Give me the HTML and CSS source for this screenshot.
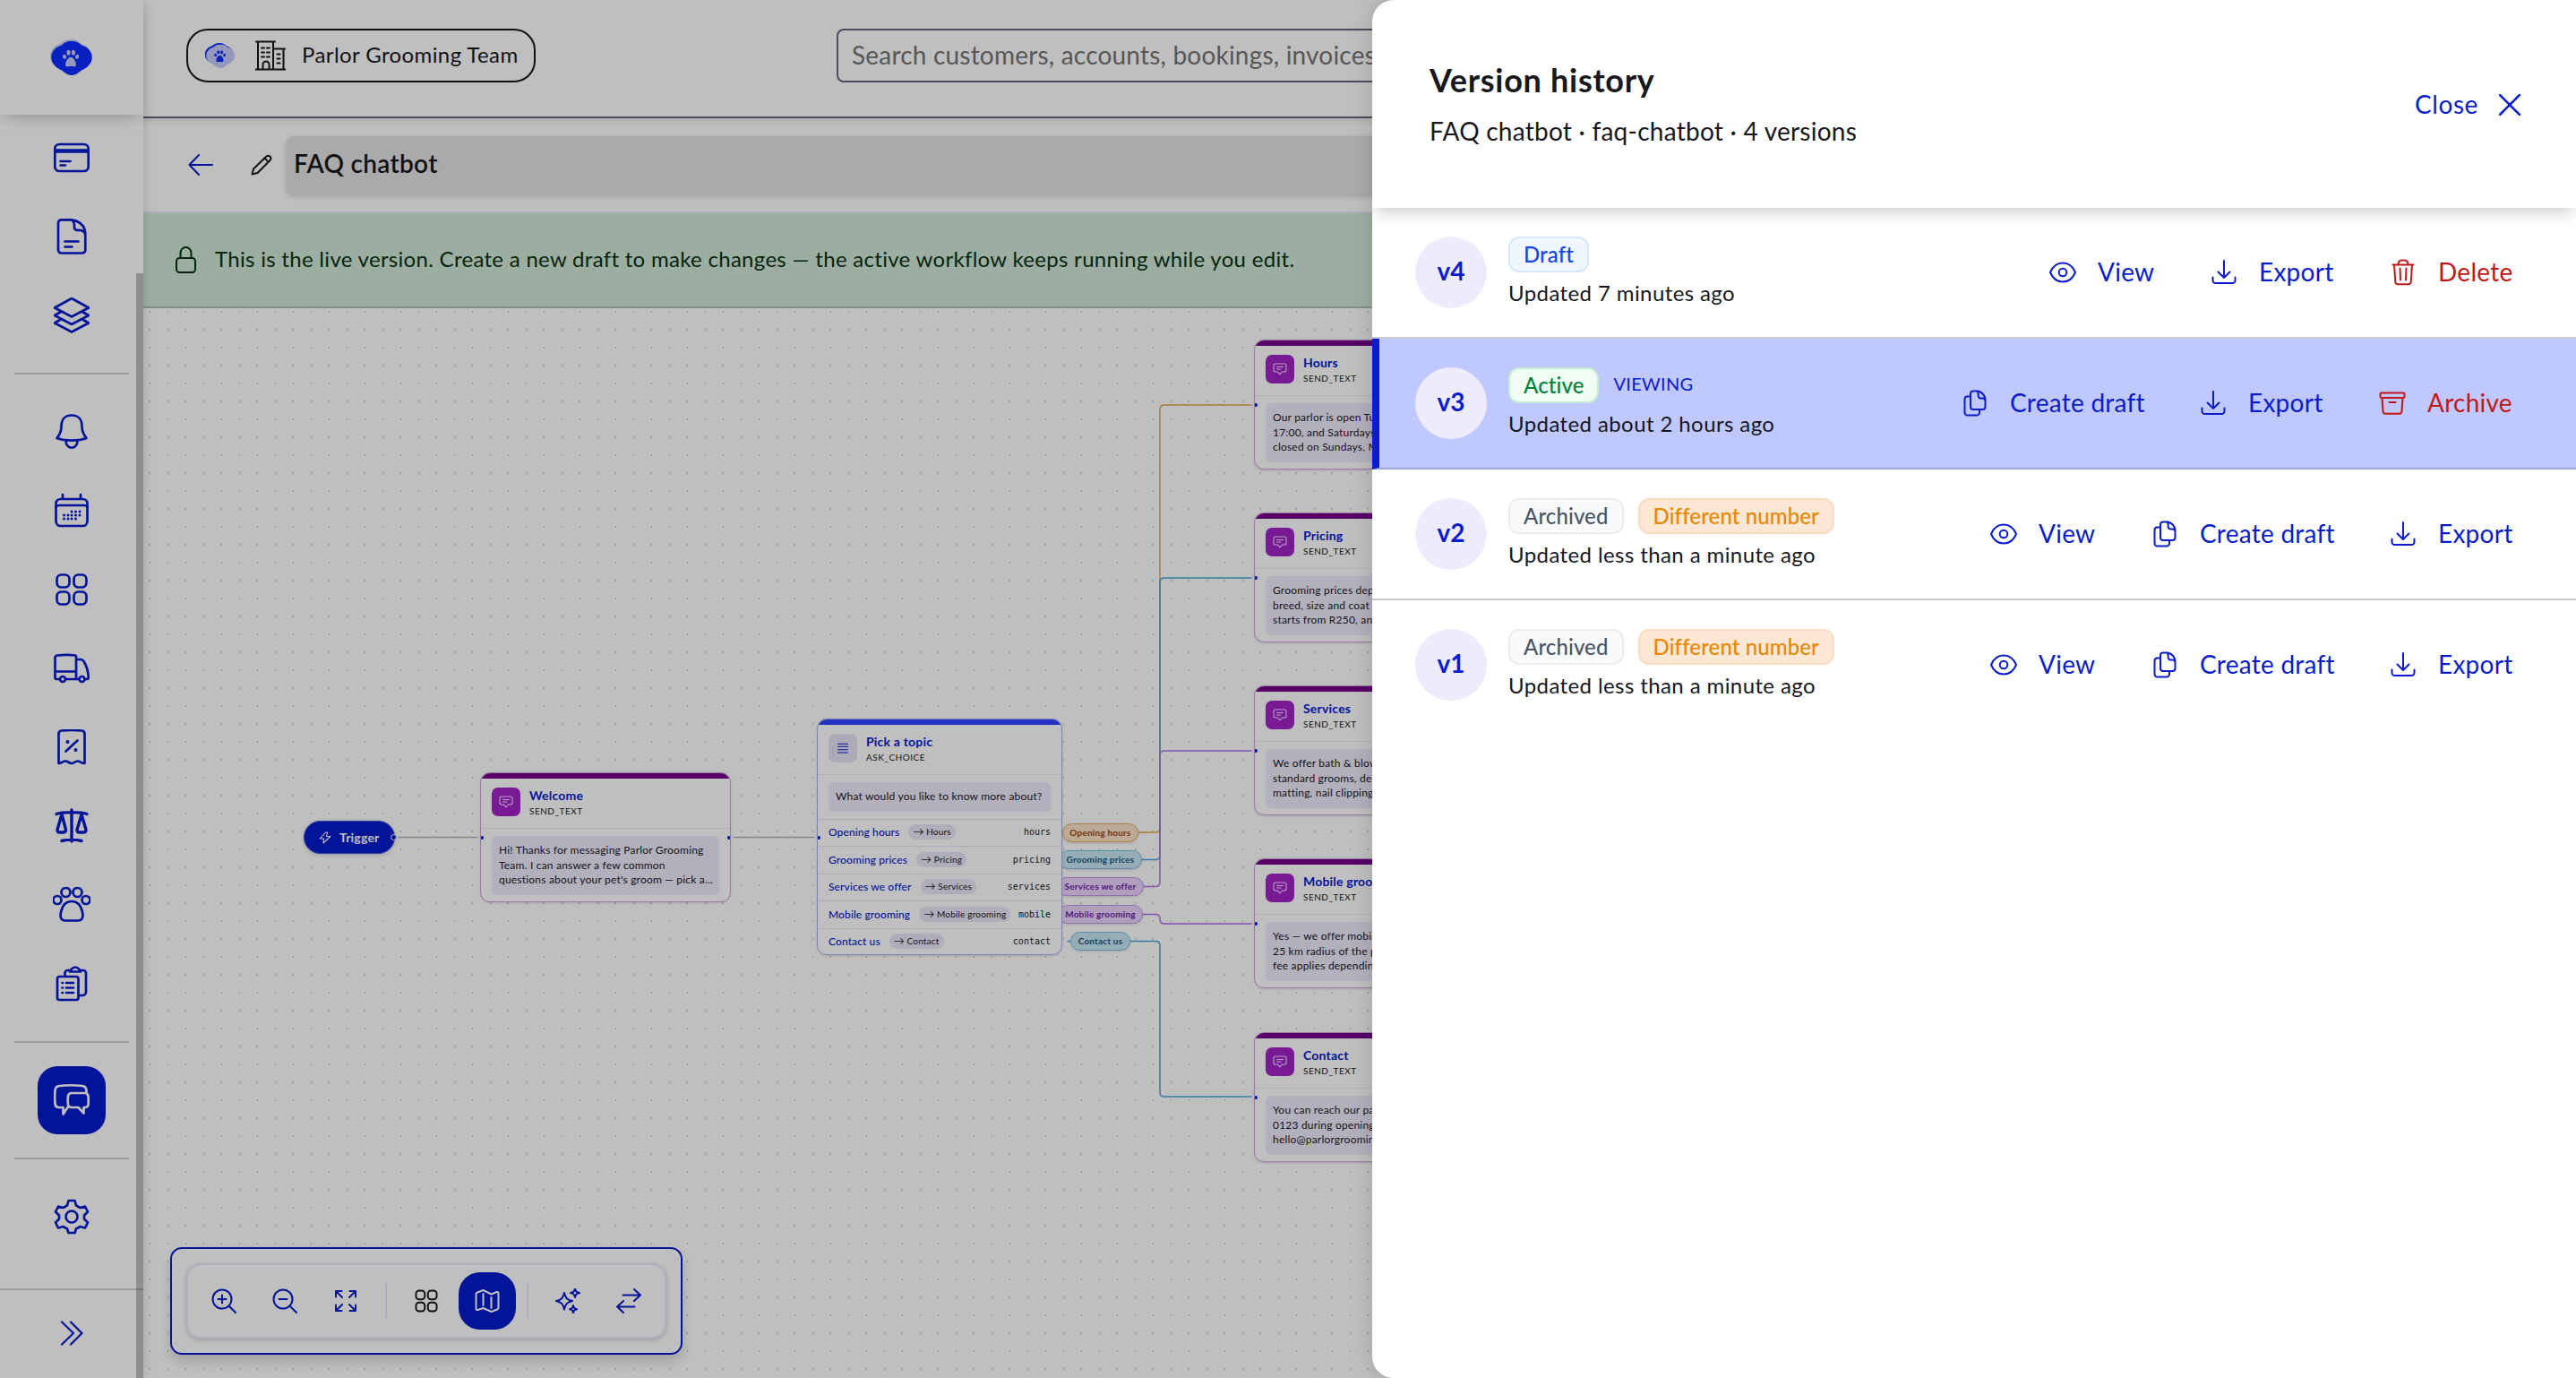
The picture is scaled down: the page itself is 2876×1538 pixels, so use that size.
FILE: index.html
```html
<!DOCTYPE html>
<html lang="en">
<head>
    <meta charset="UTF-8">
    <meta name="viewport" content="width=device-width, initial-scale=1.0">
    <title>FAQ chatbot - Version history</title>
    <link rel="stylesheet" href="styles.css">
</head>
<body>
    <!-- Shared icons -->
    <svg class="sprite" aria-hidden="true">
        <symbol id="i-eye" viewBox="0 0 32 32"><path d="M2 16C5 8.700 10 5.500 16 5.500S27 8.700 30 16C27 23.300 22 26.500 16 26.500S5 23.300 2 16Z"/><circle cx="16" cy="16" r="4.300"/></symbol>
        <symbol id="i-download" viewBox="0 0 32 32"><path d="M16 3v18.500M9.500 15.500l6.500 6.500 6.500-6.500M3.500 21.500v3.500a3 3 0 0 0 3 3h19a3 3 0 0 0 3-3v-3.500"/></symbol>
        <symbol id="i-trash" viewBox="0 0 32 32"><path d="M4.500 7.500h23M10.500 7.500c0-3 1.500-5 4-5h3c2.500 0 4 2 4 5M6 7.500l1.300 19a3 3 0 0 0 3 2.800h11.400a3 3 0 0 0 3-2.800L26 7.500M12.500 11.500l.5 13M19.500 11.500l-.5 13"/></symbol>
        <symbol id="i-copy" viewBox="0 0 32 32"><path d="M14 2.500h5c5 1 8.500 5 8.500 10V20a3 3 0 0 1-3 3H14a3 3 0 0 1-3-3V5.500a3 3 0 0 1 3-3ZM18.500 2.500c1 1 1.200 2 1.200 4v1.500a2.500 2.500 0 0 0 2.500 2.500h2c1.800 0 3 1 3.300 2.500M11 8.500H7.500a3 3 0 0 0-3 3v15a3 3 0 0 0 3 3H18a3 3 0 0 0 3-3V23"/></symbol>
        <symbol id="i-archive" viewBox="0 0 32 32"><rect x="2.500" y="4.500" width="27" height="5.500" rx="1.500"/><path d="M4.500 10l1 15a3 3 0 0 0 3 2.800h15a3 3 0 0 0 3-2.800l1-15M12.500 15h7"/></symbol>
        <symbol id="i-message" viewBox="0 0 16 16"><path d="M3 2h10a2 2 0 0 1 2 2v5a2 2 0 0 1-2 2h-2.500L8 13.800 5.500 11H3a2 2 0 0 1-2-2V4a2 2 0 0 1 2-2ZM4.500 5.500h7M4.500 8h4.500"/></symbol>
        <symbol id="i-grid" viewBox="0 0 40 40"><rect x="3.500" y="3.500" width="14" height="14" rx="5"/><rect x="22.500" y="3.500" width="14" height="14" rx="5"/><rect x="3.500" y="22.500" width="14" height="14" rx="5"/><rect x="22.500" y="22.500" width="14" height="14" rx="5"/></symbol>
        <symbol id="i-paw" viewBox="0 0 24 24"><ellipse cx="3.600" cy="10" rx="2.400" ry="3" transform="rotate(-20 3.600 10)"/><ellipse cx="9" cy="4.500" rx="2.500" ry="3.600"/><ellipse cx="15.500" cy="4.500" rx="2.500" ry="3.600"/><ellipse cx="20.600" cy="10" rx="2.400" ry="3" transform="rotate(20 20.600 10)"/><path d="M12 10.500c-3.500 0-6.500 5.500-7 9-.4 3 1.500 4.200 3.500 3.700 2.400-.6 4.600-.6 7 0 2 .5 3.900-.7 3.500-3.700-.5-3.500-3.500-9-7-9Z"/></symbol>
        <symbol id="i-blob" viewBox="0 0 48 40"><path d="M24 0c6 0 9 2 12 5 5 1 12 6 12 14s-7 13-12 15c-4 3-7 6-12 6s-8-3-12-6C7 32 0 27 0 19S7 6 12 5c3-3 6-5 12-5Z"/></symbol>
    </svg>

    <div class="app">
        <aside class="sidebar">
            <div class="brand">
                <svg class="logo" viewBox="0 0 50 40">
                    <use href="#i-blob" x="0" y="0" width="48" height="38" class="blob-light"/>
                    <use href="#i-blob" x="1" y="2" width="48" height="38" class="blob-blue"/>
                    <use href="#i-paw" x="14" y="11" width="20" height="20" class="paw-light"/>
                </svg>
            </div>
            <nav class="menu">
                <a class="menu-item"><svg viewBox="0 0 40 40"><rect x="1.300" y="5" width="37.400" height="30" rx="5"/><path d="M1.300 11.500h37.400M1.300 13.500h37.400M7.500 24h11M7.500 28.500h5.500"/></svg></a>
                <a class="menu-item"><svg viewBox="0 0 40 40"><path d="M8.500 1.300H20C30 3 35.300 9 35.300 18v17a3.500 3.500 0 0 1-3.500 3.500H8.500A3.500 3.500 0 0 1 5 35V4.800a3.500 3.500 0 0 1 3.500-3.500ZM20 1.300c2.500 1.500 3 4 3 7v2a2.500 2.500 0 0 0 2.500 2.500h3c4 0 6 2 6.800 5M12.500 25.500h15M12.500 31.500h8"/></svg></a>
                <a class="menu-item"><svg viewBox="0 0 40 40"><path d="M20 1l19 10.500L20 21.500 1 11.500ZM8 16l-7 4 19 10 19-10-7-4M8 24.500l-7 4L20 38.500l19-10-7-4"/></svg></a>
                <hr>
                <a class="menu-item"><svg viewBox="0 0 40 40"><path d="M20 1.500C12 1.500 8.500 7 8.500 14c0 6-2.500 10-5 13 9.500 3.500 23.500 3.500 33 0-2.500-3-5-7-5-13C31.500 7 28 1.500 20 1.500ZM13.500 30c0 4.500 3 7.700 6.500 7.700s6.500-3.200 6.500-7.700"/></svg></a>
                <a class="menu-item"><svg viewBox="0 0 40 40"><rect x="2.500" y="7" width="35" height="30" rx="5"/><path d="M2.500 16q1-2 4-2h27q3 0 4 2M10 2v4M30 2v4"/><path class="dots" d="M20 21h0M24.500 21h0M29 21h0M11.500 25h0M16 25h0M20 25h0M24.500 25h0M29 25h0M11.500 29h0M16 29h0M20 29h0M24.500 29h0"/></svg></a>
                <a class="menu-item"><svg><use href="#i-grid"/></svg></a>
                <a class="menu-item"><svg viewBox="0 0 40 40"><path d="M6 32H3.500a2 2 0 0 1-2-2V8a2.500 2.500 0 0 1 2.500-2.500c7-.8 14-.8 20 0A1.500 1.500 0 0 1 25 7v25H14M25 10h5c2 0 3 1 4 3 3 5 4.500 10 4.700 17a2 2 0 0 1-2 2H36M27 32h-2M1.500 23.500H25"/><circle cx="10" cy="32" r="3"/><circle cx="31.500" cy="32" r="3"/></svg></a>
                <a class="menu-item"><svg viewBox="0 0 40 40"><path d="M5.500 38V5q0-3 3-3.500 11.500-1 23 0 3 .5 3 3.500v33c-4 0-5-2.500-8-2.500S23 38 20 38s-4-2.500-7-2.500S9 38 5.500 38ZM13.500 24.500l13-12"/><path class="dots big" d="M15.500 14h0M24.500 23h0"/></svg></a>
                <a class="menu-item"><svg viewBox="0 0 40 40"><path d="M20 2v35M3 6.500C9 4 31 4 37 6.500M9 36.500c6-1.500 16-1.500 22 0M9 7L4 24q0 3 2.500 3h4.500q2.500 0 2.500-3L9 7M31 7l-5 17q0 3 2.500 3h5q2.500 0 2.500-3L31 7" stroke-width="3.400"/></svg></a>
                <a class="menu-item"><svg class="wide" viewBox="-1 0 42 40"><circle cx="4" cy="14.500" r="4.500"/><circle cx="13.500" cy="6" r="5"/><circle cx="26.500" cy="6" r="5"/><circle cx="36" cy="14.500" r="4.500"/><path d="M20 16c-7 0-11 5-12.300 14-.7 5 1.500 7.500 5 7.500h14.600c3.500 0 5.700-2.500 5-7.500C31 21 27 16 20 16Z"/></svg></a>
                <a class="menu-item"><svg viewBox="0 0 40 40"><rect x="4" y="12" width="23.500" height="26" rx="2.500"/><path d="M12.500 11.500V8a3 3 0 0 1 3-3H18M30 5h3a3 3 0 0 1 3 3v21a4 4 0 0 1-4 4h-4M18 6.500V5c1.500 0 2-3.500 6-3.500S28.500 5 30 5v1.500ZM14 19h8M14 24.500h8M14 30h8M9.500 19h.5M9.500 24.500h.5M9.500 30h.5"/></svg></a>
                <hr>
                <a class="menu-item active"><span><svg viewBox="0 -1.500 40 40"><path d="M15.500 26.500L10.500 34v-7.500H6q-4 0-4.500-4-.8-9 0-15Q2 3 6 2.500q13-1.500 26 0 4 .5 4.500 5V11M20 10.500h14.500q3.500 0 4 3.500.5 6 0 9.500-.5 3-3.500 3h-1.500V33l-6-6.500h-7.500q-3.500 0-4-3-.5-5 0-9.500.5-3.500 4-3.500Z"/></svg></span></a>
                <hr>
                <a class="menu-item"><svg viewBox="0 0 40 40"><path d="M16.500 2h7l1.500 5.500 4.500 2.500L35 8.500l3 6L34 18.500v4l4 4-3 6-5.500-1.500L25 33.500 23.500 38h-7L15 33.500 10.500 31 5 32.500l-3-6 4-4v-4l-4-4 3-6 5.500 1.500L15 7.500Z"/><circle cx="20" cy="20" r="6.500"/></svg></a>
            </nav>
            <div class="expand"><svg viewBox="0 0 26 28"><path d="M2 1.500L15 14 2 26.500M12 1.500L24.500 14 12 26.500"/></svg></div>
            <div class="scrollbar"></div>
        </aside>

        <main class="main">
            <header class="topbar">
                <div class="team">
                    <svg class="team-logo" viewBox="0 0 50 40">
                        <use href="#i-blob" x="0" y="0" width="48" height="38" class="blob-blue"/>
                        <use href="#i-blob" x="2" y="2" width="48" height="38" class="blob-light"/>
                        <use href="#i-paw" x="15" y="11" width="20" height="20" class="paw-blue"/>
                    </svg>
                    <svg class="building" viewBox="0 0 34 34"><path d="M3 32V1.500h17V32M1 1.500h21M20 9.500h11.500V32M20 9.500h13M0 32.500h34M8.500 32v-5a3.500 3.500 0 0 1 7 0v5M7 8.500h3M13 8.500h3M7 13.500h3M13 13.500h3M7 18.500h3M13 18.500h3M24.500 15.500h3M24.500 20.500h3M24.500 25.500h3"/></svg>
                    <span>Parlor Grooming Team</span>
                </div>
                <div class="search">Search customers, accounts, bookings, invoices</div>
            </header>

            <div class="editor-bar">
                <svg class="back" viewBox="0 0 28 24"><path d="M27 12H1.500M12 1L1.500 12 12 23"/></svg>
                <svg class="pencil" viewBox="0 0 24 24"><path d="M1.500 22.500l1.500-6L17.500 2.500a3 3 0 0 1 4.200 4.200L7.500 21ZM15.500 4.500l4.200 4.200"/></svg>
                <div class="title-input">FAQ chatbot</div>
            </div>

            <div class="live-banner">
                <svg viewBox="0 0 24 30"><rect x="1" y="13" width="21" height="16" rx="3.500"/><path d="M5.500 13V8c0-4 2.500-7 6-7s6 3 6 7v5"/></svg>
                <span>This is the live version. Create a new draft to make changes — the active workflow keeps running while you edit.</span>
            </div>

            <section class="canvas">
                <svg class="edges" viewBox="160 344 2716 1194">
                    <path class="e-gray" d="M445 934.500H533M819 934.500H909"/>
                    <path class="e-orange" d="M1186 929H1290q5 0 5-5V457q0-5 5-5H1397"/>
                    <path class="e-cyan" d="M1186 959.500H1290q5 0 5-5V650q0-5 5-5H1397"/>
                    <path class="e-purple" d="M1186 989.500H1290q5 0 5-5V843q0-5 5-5H1397"/>
                    <path class="e-purple" d="M1186 1020.500H1290q5 0 5 5V1026q0 5 5 5H1397"/>
                    <path class="e-cyan" d="M1192 1050.500H1290q5 0 5 5V1219q0 5 5 5H1397"/>
                </svg>

                <span class="edge-label orange l1">Opening hours</span>
                <span class="edge-label cyan l2">Grooming prices</span>
                <span class="edge-label purple l3">Services we offer</span>
                <span class="edge-label purple l4">Mobile grooming</span>
                <span class="edge-label cyan l5">Contact us</span>

                <div class="trigger">
                    <svg viewBox="0 0 14 14"><path d="M7.500 1L1.200 8h4.300L5 13l7.800-7.500H8.500L9.500 1Z"/></svg>
                    <span>Trigger</span>
                    <i class="port"></i>
                </div>

                <article class="node n-welcome">
                    <div class="node-head">
                        <span class="node-icon"><svg><use href="#i-message"/></svg></span>
                        <div><h4>Welcome</h4><small>SEND_TEXT</small></div>
                    </div>
                    <p class="node-text">Hi! Thanks for messaging Parlor Grooming<br>Team. I can answer a few common<br>questions about your pet's groom — pick a...</p>
                    <i class="pin in"></i><i class="pin out"></i>
                </article>

                <article class="node choice n-topic">
                    <div class="node-head">
                        <span class="node-icon"><svg viewBox="0 0 16 16"><path d="M2.500 3.300h11M2.500 6.300h11M2.500 9.700h11M2.500 13h11"/></svg></span>
                        <div><h4>Pick a topic</h4><small>ASK_CHOICE</small></div>
                    </div>
                    <p class="node-text">What would you like to know more about?</p>
                    <ul>
                        <li><b>Opening hours</b><em><i>→</i> Hours</em><code>hours</code></li>
                        <li><b>Grooming prices</b><em><i>→</i> Pricing</em><code>pricing</code></li>
                        <li><b>Services we offer</b><em><i>→</i> Services</em><code>services</code></li>
                        <li><b>Mobile grooming</b><em><i>→</i> Mobile grooming</em><code>mobile</code></li>
                        <li><b>Contact us</b><em><i>→</i> Contact</em><code>contact</code></li>
                    </ul>
                    <span class="pin in"></span>
                </article>

                <article class="node n-hours">
                    <div class="node-head">
                        <span class="node-icon"><svg><use href="#i-message"/></svg></span>
                        <div><h4>Hours</h4><small>SEND_TEXT</small></div>
                    </div>
                    <p class="node-text">Our parlor is open Tues<br>17:00, and Saturdays<br>closed on Sundays, Mon</p>
                    <i class="pin in"></i>
                </article>
                <article class="node n-pricing">
                    <div class="node-head">
                        <span class="node-icon"><svg><use href="#i-message"/></svg></span>
                        <div><h4>Pricing</h4><small>SEND_TEXT</small></div>
                    </div>
                    <p class="node-text">Grooming prices depend<br>breed, size and coat con<br>starts from R250, and</p>
                    <i class="pin in"></i>
                </article>
                <article class="node n-services">
                    <div class="node-head">
                        <span class="node-icon"><svg><use href="#i-message"/></svg></span>
                        <div><h4>Services</h4><small>SEND_TEXT</small></div>
                    </div>
                    <p class="node-text">We offer bath &amp; blow dry<br>standard grooms, de-<br>matting, nail clipping,</p>
                    <i class="pin in"></i>
                </article>
                <article class="node n-mobile">
                    <div class="node-head">
                        <span class="node-icon"><svg><use href="#i-message"/></svg></span>
                        <div><h4>Mobile grooming</h4><small>SEND_TEXT</small></div>
                    </div>
                    <p class="node-text">Yes — we offer mobile<br>25 km radius of the par<br>fee applies depending</p>
                    <i class="pin in"></i>
                </article>
                <article class="node n-contact">
                    <div class="node-head">
                        <span class="node-icon"><svg><use href="#i-message"/></svg></span>
                        <div><h4>Contact</h4><small>SEND_TEXT</small></div>
                    </div>
                    <p class="node-text">You can reach our parlor<br>0123 during opening<br>hello@parlorgrooming</p>
                    <i class="pin in"></i>
                </article>

                <div class="tools">
                    <div class="tools-inner">
                        <button><svg viewBox="0 0 28 28"><circle cx="12" cy="12" r="10.500"/><path d="M19.500 19.500L27 27M7.500 12h9M12 7.500v9"/></svg></button>
                        <button><svg viewBox="0 0 28 28"><circle cx="12" cy="12" r="10.500"/><path d="M19.500 19.500L27 27M7.500 12h9"/></svg></button>
                        <button><svg viewBox="0 0 28 28"><path d="M3 9.500V3h6.500M3 3l7 7M18.500 3H25v6.500M25 3l-7 7M3 18.500V25h6.500M3 25l7-7M25 18.500V25h-6.500M25 25l-7-7"/></svg></button>
                        <span class="sep"></span>
                        <button class="dark"><svg><use href="#i-grid"/></svg></button>
                        <button class="on"><svg viewBox="0 0 28 28"><path d="M1.500 6.500q0-1.500 1.500-2l6.500-2.500 9 4.500 6-2.500q2-.5 2 1.500v16q0 1.500-1.500 2l-6.500 2.500-9-4-6 2q-2 .5-2-1.500ZM9.500 6v13M18.500 10v12"/></svg></button>
                        <span class="sep"></span>
                        <button><svg viewBox="0 0 28 28"><path d="M10 5c1.500 6 3 7.500 9 9-6 1.500-7.500 3-9 9.500-1.500-6.500-3-8-9-9.500 6-1.500 7.500-3 9-9ZM22 0c.8 3.500 1.500 4.200 5 5-3.500.8-4.200 1.500-5 5-.8-3.500-1.500-4.200-5-5 3.500-.8 4.200-1.500 5-5ZM20 19c.6 3 1.200 3.600 4 4.200-2.800.6-3.400 1.200-4 4.200-.6-3-1.200-3.600-4-4.200 2.800-.6 3.400-1.200 4-4.200Z"/></svg></button>
                        <button><svg viewBox="0 0 28 28"><path d="M7.500 7.500H27M20 1l7 6.500-7 6.500M20.500 20.500H1M8 14l-7 6.500L8 27"/></svg></button>
                    </div>
                </div>
            </section>
        </main>
    </div>

    <div class="overlay"></div>

    <aside class="drawer">
        <header class="drawer-head">
            <div>
                <h2>Version history</h2>
                <p>FAQ chatbot · faq-chatbot · 4 versions</p>
            </div>
            <button class="close"><span>Close</span><svg viewBox="0 0 24 24"><path d="M1 1l22 22M23 1L1 23"/></svg></button>
        </header>

        <div class="version">
            <div class="avatar">v4</div>
            <div class="info">
                <div class="badges"><span class="badge draft">Draft</span></div>
                <p>Updated 7 minutes ago</p>
            </div>
            <div class="actions">
                <button><svg><use href="#i-eye"/></svg><span class="w-view">View</span></button>
                <button><svg><use href="#i-download"/></svg><span class="w-export">Export</span></button>
                <button class="danger"><svg><use href="#i-trash"/></svg><span class="w-delete">Delete</span></button>
            </div>
        </div>
        <div class="version current">
            <div class="avatar">v3</div>
            <div class="info">
                <div class="badges"><span class="badge live">Active</span><span class="viewing">VIEWING</span></div>
                <p>Updated about 2 hours ago</p>
            </div>
            <div class="actions">
                <button><svg><use href="#i-copy"/></svg><span class="w-create">Create draft</span></button>
                <button><svg><use href="#i-download"/></svg><span class="w-export">Export</span></button>
                <button class="danger"><svg><use href="#i-archive"/></svg><span class="w-archive">Archive</span></button>
            </div>
        </div>
        <div class="version">
            <div class="avatar">v2</div>
            <div class="info">
                <div class="badges"><span class="badge archived">Archived</span><span class="badge number">Different number</span></div>
                <p>Updated less than a minute ago</p>
            </div>
            <div class="actions">
                <button><svg><use href="#i-eye"/></svg><span class="w-view">View</span></button>
                <button><svg><use href="#i-copy"/></svg><span class="w-create">Create draft</span></button>
                <button><svg><use href="#i-download"/></svg><span class="w-export">Export</span></button>
            </div>
        </div>
        <div class="version">
            <div class="avatar">v1</div>
            <div class="info">
                <div class="badges"><span class="badge archived">Archived</span><span class="badge number">Different number</span></div>
                <p>Updated less than a minute ago</p>
            </div>
            <div class="actions">
                <button><svg><use href="#i-eye"/></svg><span class="w-view">View</span></button>
                <button><svg><use href="#i-copy"/></svg><span class="w-create">Create draft</span></button>
                <button><svg><use href="#i-download"/></svg><span class="w-export">Export</span></button>
            </div>
        </div>
    </aside>
</body>
</html>
```
FILE: styles.css
```css
* {
    box-sizing: border-box;
    margin: 0;
    padding: 0;
}
body {
    font-family: Lato, "Open Sans", sans-serif;
    color: #17171c;
    background: #fff;
    height: 1538px;
    overflow: hidden;
    position: relative;
}
svg {
    display: block;
    fill: none;
    stroke: currentColor;
    stroke-width: 2;
    stroke-linecap: round;
    stroke-linejoin: round;
    flex: none;
}
button {
    font: inherit;
    color: inherit;
    background: none;
    border: none;
    cursor: pointer;
}
.sprite {
    position: absolute;
    width: 0;
    height: 0;
}
.app {
    display: flex;
    height: 1538px;
}

/* Sidebar */
.sidebar {
    position: relative;
    z-index: 2;
    width: 160px;
    flex: none;
    display: flex;
    flex-direction: column;
    background: #fff;
    color: #051bcc;
    box-shadow: 0 0 12px rgba(0,0,0,0.15);
}
.brand {
    height: 128px;
    flex: none;
    padding: 44px 0 0 55px;
    box-shadow: 0 8px 16px -6px rgba(0,0,0,0.25);
}
.logo {
    width: 50px;
    height: 40px;
}
.blob-light {
    fill: #c6cdfb;
    stroke: none;
}
.blob-blue, .paw-blue {
    fill: #0a2bff;
    stroke: none;
}
.paw-light {
    fill: #c6cdfb;
    stroke: none;
}
.menu {
    flex: 1;
    padding-top: 4px;
}
.menu-item {
    height: 88px;
    display: flex;
    align-items: center;
    justify-content: center;
}
.menu-item svg {
    width: 40px;
    height: 40px;
    stroke-width: 2.7;
}
.menu-item svg.wide {
    width: 42px;
}
.menu-item .dots {
    stroke-width: 3;
}
.menu-item .dots.big {
    stroke-width: 4;
}
.menu-item.active span {
    width: 76px;
    height: 76px;
    border-radius: 22px;
    background: #051bcc;
    color: #fff;
    display: flex;
    align-items: center;
    justify-content: center;
}
.menu hr {
    border: none;
    height: 2px;
    background: #cfcfd8;
    margin: 20px 16px;
}
.expand {
    height: 100px;
    border-top: 2px solid #cfcfd8;
    display: flex;
    align-items: center;
    justify-content: center;
    padding-bottom: 2px;
}
.expand svg {
    width: 26px;
    height: 28px;
    stroke-width: 2.2;
}
.scrollbar {
    position: absolute;
    right: 0;
    top: 305px;
    bottom: 0;
    width: 8px;
    background: rgba(0,0,0,0.25);
}

/* Top bar */
.main {
    flex: 1;
    min-width: 0;
    display: flex;
    flex-direction: column;
}
.topbar {
    height: 132px;
    flex: none;
    border-bottom: 2px solid #62647f;
    display: flex;
    padding: 32px 0 0 48px;
}
.team {
    width: 390px;
    height: 60px;
    border: 2px solid #17171c;
    border-radius: 24px;
    display: flex;
    align-items: center;
    padding-left: 18px;
    font-size: 24px;
    letter-spacing: 0.4px;
    white-space: nowrap;
}
.team span {
    margin: 0 0 3px 18px;
}
.team-logo {
    width: 35px;
    height: 28px;
}
.building {
    width: 34px;
    height: 34px;
    margin-left: 22px;
}
.search {
    margin-left: 336px;
    width: 1000px;
    height: 60px;
    border: 2px solid #62647f;
    border-radius: 8px;
    padding-left: 15px;
    font-size: 28px;
    letter-spacing: 0.2px;
    line-height: 54px;
    color: #757575;
    white-space: nowrap;
}
.editor-bar {
    height: 106px;
    flex: none;
    border-bottom: 2px solid #edeafb;
    display: flex;
    align-items: flex-start;
    padding: 20px 0 0 50px;
    box-shadow: inset 0 8px 10px -6px rgba(0,0,0,0.12);
}
.back {
    width: 28px;
    height: 24px;
    margin-top: 20px;
    color: #051bcc;
}
.pencil {
    width: 24px;
    height: 24px;
    margin: 20px 16px 0 42px;
}
.title-input {
    width: 1600px;
    height: 65px;
    background: #e4e3e5;
    border-radius: 8px;
    padding-left: 8px;
    font-size: 28px;
    font-weight: 600;
    letter-spacing: 0.3px;
    line-height: 61px;
    box-shadow: 0 2px 6px rgba(0,0,0,0.2);
}
.live-banner {
    height: 106px;
    flex: none;
    background: #d1e9d9;
    border-bottom: 2px solid #adc1b5;
    color: #07300f;
    display: flex;
    align-items: center;
    padding-left: 36px;
    font-size: 24px;
    letter-spacing: 0.3px;
    white-space: nowrap;
}
.live-banner span {
    margin-bottom: 3px;
}
.live-banner svg {
    width: 24px;
    height: 30px;
    margin-right: 20px;
}

/* Flow canvas */
.canvas {
    position: relative;
    flex: 1;
    overflow: hidden;
    background-image: conic-gradient(from 0deg at 1px 2px, transparent 270deg, #b8b8b8 0);
    background-size: 20px 20px;
    background-position: 7px 3px;
}
.edges {
    position: absolute;
    left: 0;
    top: 0;
    width: 2716px;
    height: 1194px;
    stroke-width: 1.5;
}
.e-gray {
    stroke: #b1b1b7;
}
.e-orange {
    stroke: #e5a34a;
}
.e-cyan {
    stroke: #44a5d8;
}
.e-purple {
    stroke: #b46df0;
}
.edge-label {
    position: absolute;
    height: 21px;
    border: 1px solid;
    border-radius: 11px;
    font-size: 10px;
    font-weight: 700;
    line-height: 18px;
    text-align: center;
    white-space: nowrap;
    letter-spacing: 0.2px;
    box-shadow: 0 1px 3px rgba(0,0,0,0.15);
}
.edge-label.orange {
    background: #fbe3c8;
    border-color: #e8ac62;
    color: #9a4614;
}
.edge-label.cyan {
    background: #c9e6f5;
    border-color: #78bfe2;
    color: #18577c;
}
.edge-label.purple {
    background: #ead5fb;
    border-color: #c394ee;
    color: #6d21a8;
}
.l1 { left: 1026px; top: 575px; width: 85px; }
.l2 { left: 1022px; top: 605px; width: 93px; }
.l3 { left: 1020px; top: 635px; width: 97px; }
.l4 { left: 1021px; top: 666px; width: 95px; }
.l5 { left: 1035px; top: 696px; width: 67px; }
.trigger {
    position: absolute;
    left: 179px;
    top: 572px;
    width: 102px;
    height: 37px;
    border-radius: 19px;
    background: #051bcc;
    border: 1px solid #3f55d8;
    color: #fff;
    display: flex;
    align-items: center;
    padding-left: 16px;
    font-size: 14px;
    font-weight: 700;
    letter-spacing: 0.2px;
    box-shadow: 0 1px 4px rgba(0,0,0,0.2);
}
.trigger span {
    margin-bottom: 1px;
}
.trigger svg {
    width: 14px;
    height: 14px;
    stroke-width: 1.1;
    margin-right: 9px;
}
.port {
    position: absolute;
    right: -3px;
    top: 14px;
    width: 7px;
    height: 7px;
    border: 1.5px solid #fff;
    border-radius: 50%;
    background: #051bcc;
}
.node {
    position: absolute;
    width: 280px;
    height: 145px;
    background: #fff;
    border: 1px solid #cda4da;
    border-radius: 11px;
    overflow: hidden;
    box-shadow: 0 1px 3px rgba(0,0,0,0.15);
}
.node::before {
    content: "";
    display: block;
    height: 6px;
    background: #73008b;
}
.n-welcome { left: 376px; top: 518px; }
.n-topic { left: 752px; top: 458px; }
.n-hours { left: 1240px; top: 35px; }
.n-pricing { left: 1240px; top: 228px; }
.n-services { left: 1240px; top: 421px; }
.n-mobile { left: 1240px; top: 614px; }
.n-contact { left: 1240px; top: 808px; }
.node-head {
    height: 56px;
    border-bottom: 1px solid #edeafb;
    display: flex;
    padding: 10px 12px 0;
    gap: 10px;
}
.node-icon {
    width: 32px;
    height: 32px;
    border-radius: 7px;
    background: #a023c5;
    color: #f4dcff;
    display: flex;
    align-items: center;
    justify-content: center;
}
.node-icon svg {
    width: 16px;
    height: 16px;
    stroke-width: 1.1;
}
.node h4 {
    font-size: 14px;
    font-weight: 700;
    line-height: 17px;
    letter-spacing: 0.2px;
    color: #051bcc;
}
.node small {
    display: block;
    font-size: 10px;
    line-height: 18px;
    letter-spacing: 0.5px;
}
.node-text {
    margin: 8px 12px 0;
    padding: 8px;
    background: #efebfc;
    border-radius: 6px;
    font-size: 12px;
    line-height: 16.5px;
    letter-spacing: 0.2px;
    white-space: nowrap;
}
.pin {
    position: absolute;
    top: 70px;
    width: 4px;
    height: 4px;
    border-radius: 50%;
    background: #051bcc;
}
.pin.in { left: -1px; }
.pin.out { right: -1px; }
.node.choice {
    width: 274px;
    height: 264px;
    border: 1.5px solid #a9b5fb;
}
.choice::before {
    background: #2f45ff;
}
.choice .node-icon {
    background: #e6e3f5;
    color: #051bcc;
}
.choice .pin {
    top: 130px;
}
.choice ul {
    list-style: none;
    margin-top: 8px;
}
.choice li {
    height: 30.5px;
    border-top: 1px solid #e6e3f5;
    display: flex;
    align-items: center;
    padding: 0 12px 1px;
    white-space: nowrap;
}
.choice b {
    font-size: 12px;
    font-weight: 500;
    letter-spacing: 0.1px;
    color: #051bcc;
}
.choice em {
    height: 17px;
    margin-left: 10px;
    padding: 0 5px;
    border-radius: 9px;
    background: #eae7f7;
    font-style: normal;
    font-size: 10px;
    line-height: 16px;
    letter-spacing: 0.2px;
}
.choice em i {
    display: inline-block;
    width: 12px;
    font-size: 12px;
    line-height: 14px;
    font-style: normal;
}
.choice code {
    margin-left: auto;
    font-family: "DejaVu Sans Mono", monospace;
    font-size: 10px;
}

/* Canvas tools */
.tools {
    position: absolute;
    left: 30px;
    top: 1048px;
    border: 2px solid #051bcc;
    border-radius: 13px;
    padding: 16px;
    background: #fff;
    box-shadow: 0 8px 14px rgba(0,0,0,0.15);
}
.tools-inner {
    display: flex;
    align-items: center;
    gap: 4px;
    border: 2px solid #eae7fb;
    border-radius: 16px;
    padding: 8px;
    box-shadow: 0 2px 5px rgba(0,0,0,0.18);
}
.tools button {
    width: 64px;
    height: 64px;
    border-radius: 24px;
    display: flex;
    align-items: center;
    justify-content: center;
    color: #051bcc;
}
.tools svg {
    width: 28px;
    height: 28px;
}
.tools .dark {
    color: #17171c;
}
.tools .dark svg {
    stroke-width: 2.8;
}
.tools .on {
    background: #051bcc;
    color: #fff;
}
.sep {
    width: 2px;
    height: 40px;
    margin: 0 8px;
    background: #eae7fb;
}

.overlay {
    position: absolute;
    inset: 0;
    z-index: 5;
    background: rgba(0,0,0,0.25);
}

/* Version history drawer */
.drawer {
    position: absolute;
    z-index: 6;
    top: 0;
    right: 0;
    width: 1344px;
    height: 1538px;
    background: #fff;
    border-radius: 24px 0 0 24px;
    overflow: hidden;
    box-shadow: 0 0 24px rgba(0,0,0,0.16);
}
.drawer-head {
    position: relative;
    height: 232px;
    padding: 64px 62px 0 64px;
    display: flex;
    justify-content: space-between;
    align-items: flex-start;
    box-shadow: 0 8px 18px -4px rgba(0,0,0,0.22);
}
.drawer h2 {
    font-size: 36px;
    font-weight: 700;
    line-height: 50px;
    letter-spacing: 0.7px;
}
.drawer-head p {
    font-size: 28px;
    line-height: 36px;
    letter-spacing: 0.25px;
    margin-top: 14px;
}
.close {
    display: flex;
    align-items: center;
    gap: 23px;
    margin-top: 34px;
    color: #0a1ccc;
    font-size: 28px;
    line-height: 36px;
    letter-spacing: 0.6px;
}
.close span {
    margin-bottom: 2px;
}
.close svg {
    width: 24px;
    height: 24px;
    stroke-width: 2.5;
}
.version {
    height: 146px;
    border-bottom: 2px solid #c9c9d0;
    display: flex;
    align-items: flex-start;
    padding: 32px 69px 0 48px;
}
.version:last-child {
    border-bottom: none;
}
.version.current {
    background: #bfc8ff;
    border-left: 8px solid #0a1ccc;
    border-bottom-color: #a2a9d8;
    padding-left: 40px;
}
.avatar {
    width: 80px;
    height: 80px;
    border-radius: 50%;
    background: #eeebfc;
    color: #0a1ccc;
    font-size: 28px;
    font-weight: 700;
    line-height: 77px;
    text-align: center;
    margin-right: 24px;
}
.badges {
    display: flex;
    gap: 16px;
    height: 40px;
}
.badge {
    height: 40px;
    border: 2px solid;
    border-radius: 12px;
    padding: 0 15px;
    font-size: 24px;
    font-weight: 500;
    line-height: 35px;
    letter-spacing: 0.1px;
}
.badge.draft {
    color: #1447e6;
    background: #eff6ff;
    border-color: #d6e6fb;
}
.badge.live {
    color: #008236;
    background: #f0fdf4;
    border-color: #c4ecd0;
}
.badge.archived {
    color: #4a5565;
    background: #f9fafb;
    border-color: #ebecee;
}
.badge.number {
    color: #e88700;
    background: #fce6d4;
    border-color: #fadcc0;
}
.viewing {
    font-size: 20px;
    line-height: 36px;
    letter-spacing: 0.3px;
    color: #0a1ccc;
}
.info p {
    font-size: 24px;
    line-height: 32px;
    letter-spacing: 0.4px;
    margin-top: 7px;
}
.actions {
    margin-left: auto;
    height: 80px;
    display: flex;
    align-items: center;
    gap: 60px;
}
.actions button {
    display: flex;
    align-items: center;
    gap: 23px;
    color: #0a1ccc;
    font-size: 28px;
    line-height: 36px;
    letter-spacing: 0.25px;
    text-align: left;
    white-space: nowrap;
}
.actions button span {
    margin-bottom: 3px;
}
.actions .danger {
    color: #c01818;
}
.actions svg {
    width: 32px;
    height: 32px;
}
.w-view { width: 65px; }
.w-export { width: 85px; }
.w-delete { width: 85px; }
.w-create { width: 151px; }
.w-archive { width: 97px; }
```
